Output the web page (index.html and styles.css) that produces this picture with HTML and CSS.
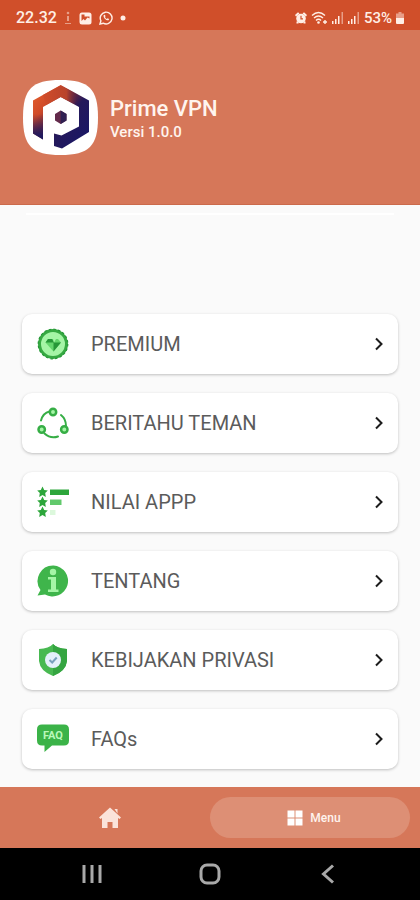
FILE: index.html
```html
<!DOCTYPE html>
<html lang="id">
<head>
<meta charset="utf-8">
<meta name="viewport" content="width=device-width, initial-scale=1">
<title>Prime VPN</title>
<link rel="stylesheet" href="styles.css">
</head>
<body>
<div class="status">
  <div class="status-left">
    <span class="clock">22.32</span>
    <svg class="faint" width="8" height="14" viewBox="0 0 8 14"><circle cx="4" cy="2" r="1.3"/><path d="M3 5h2v5H3zM1 12h6v1H1z"/></svg>
    <svg width="13" height="13" viewBox="0 0 13 13"><rect x=".5" y=".5" width="12" height="12" rx="2.5"/><path class="cut" d="M2.500 2.500h3v2h5v2L8.500 5.500 6 8.500 4.500 7l-2 2z"/></svg>
    <svg class="line" width="14" height="14" viewBox="0 0 14 14"><path d="M1 13l.9-3.200A5.900 5.900 0 1 1 4.200 12.200z"/><path class="handset" d="M4.600 4.200C4 6.500 7 9.700 9.600 9.300l.5-1.200-1.500-.8-.8.7C6.900 7.600 6.300 7 6 6.100l.6-.8-.7-1.500z"/></svg>
    <svg width="6" height="6" viewBox="0 0 6 6"><circle cx="3" cy="3" r="2.500"/></svg>
  </div>
  <div class="status-right">
    <svg width="12" height="12" viewBox="0 0 12 12"><circle cx="6" cy="6.500" r="4.800"/><path d="M0 3L3 .3 4.500 1.500 1 4.500zM12 3L9 .3 7.500 1.500 11 4.500zM1.500 9.500h2v2h-2zM8.500 9.500h2v2h-2z"/><path class="hand" d="M6 3.800v3h2"/></svg>
    <svg class="line wifi" width="17" height="14" viewBox="0 0 17 14"><path d="M1 4.500Q7.500-1.500 14 4.500M3 7Q7.500 3 12 7M5 9.500Q7.500 7 10 9.500M12 11h4M14 9v4"/><circle class="solid" cx="7.500" cy="11.500" r="1.300"/></svg>
    <svg width="12" height="12" viewBox="0 0 12 12"><path d="M0 9h1.500v3H0zM3 7h1.500v5H3zM6 4h1.500v8H6z"/><path class="faint" d="M9.500 0H11v12H9.500z"/></svg>
    <svg width="12" height="12" viewBox="0 0 12 12"><path d="M0 9h1.500v3H0zM3 7h1.500v5H3zM6 4h1.500v8H6z"/><path class="faint" d="M9.500 0H11v12H9.500z"/></svg>
    <span class="battery">53%</span>
    <svg width="8" height="12" viewBox="0 0 8 12"><path class="faint" d="M2.500 0h3v1.500H8V6H0V1.500h2.500z"/><path d="M0 6h8v5q0 1-1 1H1q-1 0-1-1z"/></svg>
  </div>
</div>

<header class="header">
  <svg class="logo" viewBox="0 0 75 75" role="img" aria-label="Prime VPN">
    <defs>
      <linearGradient id="brand" x1="10" y1="18" x2="62" y2="58" gradientUnits="userSpaceOnUse">
        <stop offset="0" stop-color="#df5a2c"/><stop offset=".22" stop-color="#cf4a29"/><stop offset=".42" stop-color="#742838"/><stop offset=".62" stop-color="#25195a"/><stop offset="1" stop-color="#1a1765"/>
      </linearGradient>
      <linearGradient id="shade" x1="0" y1="34" x2="0" y2="56" gradientUnits="userSpaceOnUse">
        <stop offset="0" stop-color="#20195e" stop-opacity="0"/><stop offset="1" stop-color="#20195e"/>
      </linearGradient>
      <linearGradient id="glow" x1="20" y1="0" x2="56" y2="0" gradientUnits="userSpaceOnUse">
        <stop offset="0" stop-color="#d04c29"/><stop offset=".65" stop-color="#b9432b"/><stop offset="1" stop-color="#401b4d" stop-opacity="0"/>
      </linearGradient>
    </defs>
    <path fill="#fff" d="M37.500 0C66 0 75 9 75 37.500S66 75 37.500 75 0 66 0 37.500 9 0 37.500 0z"/>
    <path fill="url(#brand)" d="M37.700 5L66 20.500V52L39 68.500 31 66V53.500L38.500 55.500 56 46.500V27L37.700 17 20 27V59.500L10 53.500V20.500z"/>
    <path fill="url(#glow)" d="M20 15L37.700 5.500 57 16 51 24 37.700 17 23 25z"/>
    <path fill="url(#shade)" d="M10 34H20V59.500L10 53.500z"/>
    <path fill="#632a4b" d="M37.700 30.500L43.500 34V40.500L37.700 44 32 40.500V34z"/>
    <path fill="#302052" d="M37.700 30.500L43.500 34V40.500L37.700 44z"/>
  </svg>
  <div class="heading">
    <h1 class="title">Prime VPN</h1>
    <p class="version">Versi 1.0.0</p>
  </div>
</header>

<main class="content">
  <hr class="divider">
  <nav class="list" aria-label="Menu">
    <a class="card" href="#premium">
      <svg class="icon" viewBox="0 0 32 32"><circle cx="16" cy="16" r="13.500" fill="#a5f5a6" stroke="#36a942" stroke-width="3"/><circle cx="16" cy="16" r="14.800" fill="none" stroke="#269738" stroke-width="1.200" stroke-dasharray="2.500 2.150"/><path fill="#64d66d" d="M8.500 14.500L11 11h10l3 3.500-7.500 9z"/><path fill="#269738" d="M8.500 14.500L11 11h4l2 3.500zM16.500 14.500H24l-7.500 9z"/><path fill="#a5f5a6" d="M16 11h3l-2 3.500z"/></svg>
      <span class="label">PREMIUM</span>
      <svg class="chevron" viewBox="0 0 8 14"><path d="M1 1.500L6.500 7 1 12.500"/></svg>
    </a>
    <a class="card" href="#beritahu">
      <svg class="icon" viewBox="0 0 32 32"><g fill="none" stroke="#36ae45" stroke-width="2" stroke-linecap="round"><path d="M4 13.500Q6 6 12.500 4.500M24 8Q29 12 29 19M7.500 26.500Q13.500 32 21 29.500"/><g fill="#a5f5a6" stroke-width="2.500"><circle cx="16" cy="5" r="3.200"/><circle cx="4.700" cy="22.500" r="3.200"/><circle cx="27.300" cy="22.500" r="3.200"/></g></g></svg>
      <span class="label">BERITAHU TEMAN</span>
      <svg class="chevron" viewBox="0 0 8 14"><path d="M1 1.500L6.500 7 1 12.500"/></svg>
    </a>
    <a class="card" href="#nilai">
      <svg class="icon" viewBox="0 0 32 32"><defs><path id="star" d="M0-5.500L1.700-2 5.300-1.500 2.700 1.100 3.300 5 0 3.100-3.300 5-2.700 1.100-5.300-1.500-1.700-2z"/></defs><g fill="#2da63b"><use href="#star" x="5.500" y="6"/><use href="#star" x="5.500" y="16"/><use href="#star" x="5.500" y="26"/><path d="M13 3.500h19v5.500H13z"/></g><path fill="#62c96c" d="M13 13.500h11.500V19H13z"/><path fill="#dcf8dc" d="M13 24h5.500v5H13z"/></svg>
      <span class="label">NILAI APPP</span>
      <svg class="chevron" viewBox="0 0 8 14"><path d="M1 1.500L6.500 7 1 12.500"/></svg>
    </a>
    <a class="card" href="#tentang">
      <svg class="icon" viewBox="0 0 32 32"><path fill="#3fb54b" d="M16.500 0.500A15.500 15.500 0 1 1 8 29.500L0.500 30.500 3.500 25A15.500 15.500 0 0 1 16.500.5z"/><circle cx="16" cy="7" r="3.200" fill="#a5f5a6"/><path fill="#a5f5a6" d="M11 12h8v12.500h2.500V27H11v-2.500h3v-10h-3z"/></svg>
      <span class="label">TENTANG</span>
      <svg class="chevron" viewBox="0 0 8 14"><path d="M1 1.500L6.500 7 1 12.500"/></svg>
    </a>
    <a class="card" href="#privasi">
      <svg class="icon" viewBox="0 0 32 32"><path fill="#48b951" d="M16 0Q20 4.500 30 5V17Q29 27 16 32 3 27 2 17V5Q12 4.500 16 0z"/><path fill="#35a541" d="M16 0Q20 4.500 30 5V17Q29 27 16 32z"/><circle cx="16" cy="16" r="8" fill="#e4f0fa"/><path fill="none" stroke="#78a0bd" stroke-width="2" d="M12.500 16l2.700 2.500 4.500-5"/></svg>
      <span class="label">KEBIJAKAN PRIVASI</span>
      <svg class="chevron" viewBox="0 0 8 14"><path d="M1 1.500L6.500 7 1 12.500"/></svg>
    </a>
    <a class="card" href="#faqs">
      <svg class="icon" viewBox="0 0 32 32"><path fill="#3bb348" d="M5 1.500H27Q32 1.500 32 6.500V17.500Q32 22.500 27 22.500H15L7.500 29V22.500H5Q0 22.500 0 17.500V6.500Q0 1.500 5 1.500z"/><text class="faq" x="16" y="16" text-anchor="middle">FAQ</text></svg>
      <span class="label">FAQs</span>
      <svg class="chevron" viewBox="0 0 8 14"><path d="M1 1.500L6.500 7 1 12.500"/></svg>
    </a>
  </nav>
</main>

<nav class="tabs" aria-label="Tab">
  <a class="tab" href="#home" aria-label="Home"><svg width="22" height="22" viewBox="0 0 22 22"><path fill="#fbe3da" d="M11 .5L22 10.500 20.500 12 19 11V21h-5.500v-6h-5v6H3V11l-1.500 1L0 10.500zM15.500 2h3v4.500z"/></svg></a>
  <a class="tab active" href="#menu" aria-current="page"><svg width="16" height="16" viewBox="0 0 16 16"><path fill="#fff" d="M.5.5h7v7h-7zM8.500.5h7v7h-7zM.5 8.500h7v7h-7zM8.500 8.500h7v7h-7z"/></svg><span>Menu</span></a>
</nav>

<div class="system">
  <button aria-label="Recents"><svg width="20" height="20" viewBox="0 0 20 20"><path d="M2 1v18M10 1v18M18 1v18"/></svg></button>
  <button aria-label="Home"><svg width="22" height="22" viewBox="0 0 22 22"><rect x="2" y="2" width="18" height="18" rx="6"/></svg></button>
  <button aria-label="Back"><svg width="20" height="20" viewBox="0 0 20 20"><path d="M15 1.500L5.500 10 15 18.500"/></svg></button>
</div>
</body>
</html>
```
FILE: styles.css
```css
* {
  box-sizing: border-box;
}

body {
  margin: 0;
  min-height: 100vh;
  display: flex;
  flex-direction: column;
  background: #fafafa;
  font-family: Roboto, "Liberation Sans", sans-serif;
}

svg {
  display: block;
  flex: none;
}

a {
  color: inherit;
  text-decoration: none;
}

.status {
  display: flex;
  justify-content: space-between;
  align-items: center;
  padding: 8px 16px 2px;
  background: #d04f2a;
  color: #ffeee5;
  line-height: 20px;
  font-weight: 500;
}

.status svg {
  fill: #ffeee5;
}

.status-left,
.status-right {
  display: flex;
  align-items: center;
}

.status-left {
  gap: 7px;
}

.status-right {
  gap: 4px;
}

.clock {
  font-size: 16px;
}

.battery {
  font-size: 15px;
}

.status .faint {
  opacity: 0.5;
}

.status .line {
  fill: none;
  stroke: #ffeee5;
  stroke-width: 1.4;
}

.status .handset,
.status .solid {
  fill: #ffeee5;
  stroke: none;
}

.status .cut {
  fill: #d04f2a;
}

.status .hand {
  fill: none;
  stroke: #d04f2a;
  stroke-width: 1.2;
}

.header {
  display: flex;
  align-items: center;
  gap: 12px;
  padding: 50px 23px;
  background: #d67759;
  box-shadow: inset 0 -1px #cb6a4b;
  color: #fff4ee;
}

.logo {
  width: 75px;
  height: 75px;
}

.heading {
  padding-top: 2px;
}

.title {
  margin: 0;
  font-size: 22px;
  line-height: 26px;
  font-weight: 500;
}

.version {
  margin: 0;
  font-size: 15px;
  line-height: 20px;
  font-weight: 500;
}

.content {
  flex: 1;
  padding: 8px 22px 18px;
}

.divider {
  height: 2px;
  margin: 0 4px 99px;
  border: 0;
  background: #fff;
}

.list {
  display: grid;
  gap: 19px;
}

.card {
  display: flex;
  align-items: center;
  height: 60px;
  padding: 0 15px;
  border-radius: 10px;
  background: #fff;
  box-shadow: 0 1px 3px rgba(0, 0, 0, 0.24);
}

.icon {
  width: 32px;
  height: 32px;
}

.label {
  flex: 1;
  margin-left: 22px;
  color: #5b5b5b;
  font-size: 20px;
  line-height: 24px;
}

.chevron {
  width: 8px;
  height: 14px;
  fill: none;
  stroke: #1c1c1c;
  stroke-width: 2;
}

.faq {
  fill: #b9f8ba;
  font-size: 11px;
  font-weight: 700;
}

.tabs {
  display: grid;
  grid-template-columns: 1fr 1fr;
  padding: 10px;
  background: #d67759;
}

.tab {
  display: flex;
  align-items: center;
  justify-content: center;
  gap: 7px;
  height: 41px;
  border-radius: 21px;
  color: #fff4ee;
  font-size: 12px;
  font-weight: 500;
}

.active {
  padding-left: 8px;
  background: #dd8f75;
}

.system {
  display: flex;
  justify-content: center;
  gap: 74px;
  padding: 4px 0;
  background: #000;
}

.system button {
  display: grid;
  place-items: center;
  width: 44px;
  height: 44px;
  padding: 0;
  border: 0;
  background: none;
}

.system svg {
  fill: none;
  stroke: #a9a9a9;
  stroke-width: 3;
}
```
